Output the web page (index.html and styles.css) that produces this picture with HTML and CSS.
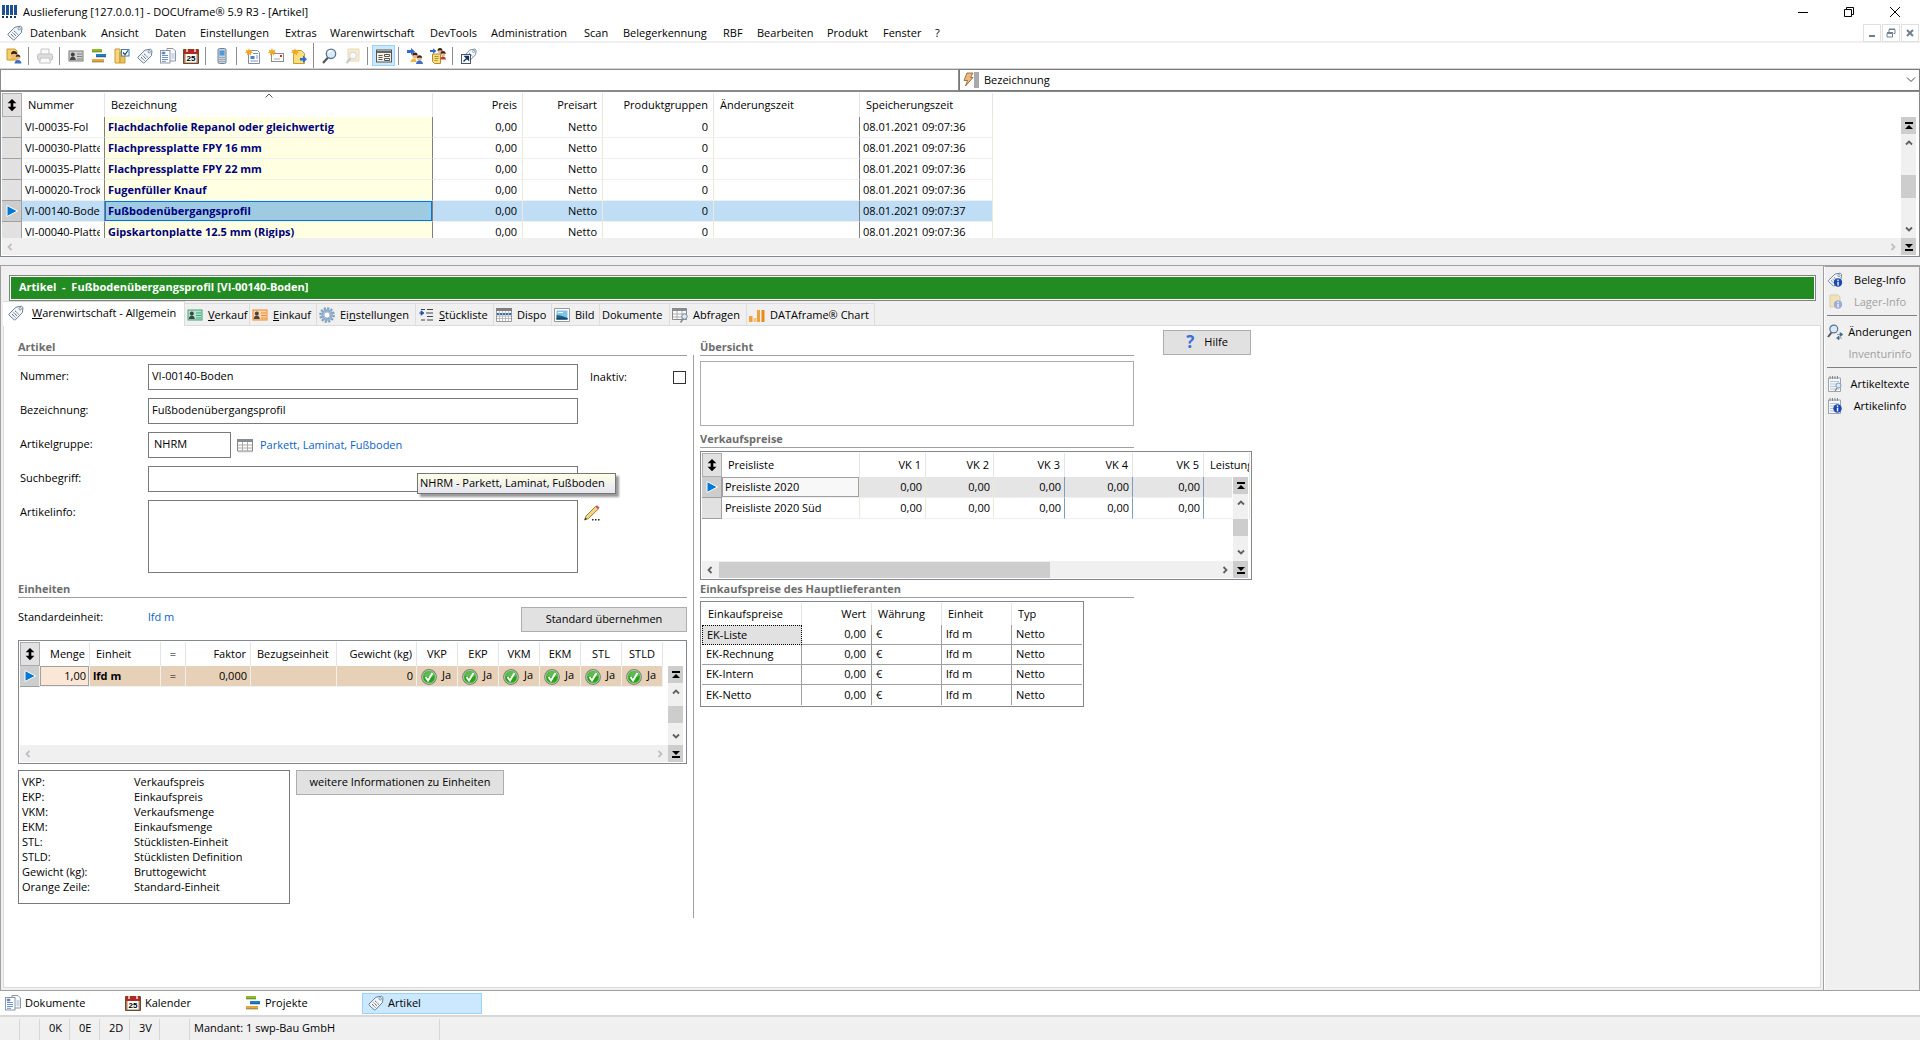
FILE: index.html
```html
<!DOCTYPE html>
<html lang="de">
<head>
    <meta charset="utf-8">
    <title>Auslieferung [127.0.0.1] - DOCUframe® 5.9 R3 - [Artikel]</title>
    <link rel="stylesheet" href="styles.css">
</head>
<body>

<!-- icon sprite -->
<svg class="sprite" aria-hidden="true">
    <symbol id="i-logo" viewBox="0 0 16 16">
        <path d="M0 1h3v10H0zM4 1h3v10H4zM8 1h3v10H8zM12 1h3v10h-3z" fill="#1d4f91"/>
        <path d="M0 12h2v2H0zM4 12h2v2H4zM8 12h2v2H8zM12 12h2v2h-2z" fill="#14315c"/>
    </symbol>
    <symbol id="i-tag" viewBox="0 0 16 16">
        <path d="M1 9 8 2.2 13.5 1.2 15 2.6 14.4 7.6 7.4 14.8Q6.6 15.2 6 14.6L1.2 10.2Q.7 9.6 1 9z" fill="#f4f7fa" stroke="#66809a"/>
        <circle cx="12.2" cy="3.8" r="1.2" fill="#fff" stroke="#66809a" stroke-width=".8"/>
        <path d="M4 9.2l3.4 3.2M5.6 7.6l3.4 3.2M7.2 6l3.4 3.2" stroke="#445" stroke-dasharray="1.2 .6"/>
    </symbol>
    <symbol id="i-user" viewBox="0 0 16 16">
        <path d="M1 1h8l2 2v9H1z" fill="#f3cf6b" stroke="#c99b35"/>
        <circle cx="8" cy="6.500" r="2.800" fill="#e9b98b"/><path d="M5 6.500q0-4 3.500-3.500Q11.500 3.500 11 6.500 8 5 5 6.500z" fill="#3b2314"/>
        <path d="M4 13q.5-4 4-3.600 2 .2 3 2z" fill="#edb93f"/>
        <circle cx="12" cy="9.500" r="2.300" fill="#e9b98b"/><path d="M9.600 9q.5-3 2.800-2.500 2 .5 2 2.800-2-1.300-4.800-.3z" fill="#3b2314"/>
        <path d="M8.500 15.500q.3-3.500 3.500-3.500t3.500 3.500z" fill="#3b6fc9"/>
    </symbol>
    <symbol id="i-print" viewBox="0 0 16 16">
        <path d="M4 6V1h8v5" fill="#fafafa" stroke="#c4c4c4"/><rect x=".5" y="6" width="15" height="6" rx="1.500" fill="#ddd" stroke="#c0c0c0"/>
        <path d="M3.500 10h9l1 5h-11z" fill="#fafafa" stroke="#c4c4c4"/>
    </symbol>
    <symbol id="i-card" viewBox="0 0 16 16">
        <rect x=".5" y="2.500" width="15" height="11" fill="currentColor"/>
        <rect x="1.500" y="3.500" width="13" height="9" fill="#fff" fill-opacity=".65"/>
        <circle cx="4.800" cy="6.500" r="2" fill="#444"/><path d="M1.800 12q.4-3.600 3-3.600t3 3.600z" fill="#444"/>
        <path d="M9 6h5M9 8.500h5M9 11h5" stroke="currentColor"/>
    </symbol>
    <symbol id="i-bars" viewBox="0 0 16 16">
        <path d="M1 1h10v3H1z" fill="#8fb925"/><path d="M5 6h10v3H5z" fill="#1b7fc4"/><path d="M1 11h12v3H1z" fill="#eaa63a"/>
        <path d="M1 4h10M5 9h10M1 14h12" stroke="#000" stroke-opacity=".35"/>
    </symbol>
    <symbol id="i-plan" viewBox="0 0 16 16">
        <path d="M1 1h5v14H1z" fill="#f6d67b" stroke="#c99b35"/><path d="M6 4h5v11H6z" fill="#edc055" stroke="#c99b35"/>
        <rect x="7.500" y="1.500" width="7.500" height="6.500" fill="#fff" stroke="#3c7dc0"/><path d="M9 4.500l2 2 3-4" fill="none" stroke="#246" stroke-width="1.200"/>
    </symbol>
    <symbol id="i-docs" viewBox="0 0 16 16">
        <path d="M7 .5h6l2.500 2.500v10H7z" fill="#f7f9fb" stroke="#8a97a6"/>
        <rect x=".5" y="2.500" width="9.500" height="12.500" fill="#fff" stroke="#8a97a6"/>
        <path d="M2 7.500h6M2 9.500h6M2 11.500h6M2 13.300h4" stroke="#5c86c4" stroke-width=".9"/><path d="M2 4h3v2H2zM11.500 6h3M11.500 8h3M11.500 10h3" stroke="#8aa4cc" fill="#3a67b0" stroke-width=".8"/>
    </symbol>
    <symbol id="i-cal" viewBox="0 0 16 16">
        <path d="M.5 1.500h15v14H.5z" fill="#a67c58" stroke="#6b4a33"/><path d="M1 1.500h14V6H1z" fill="#b5281e"/>
        <path d="M4 0v4M12 0v4" stroke="#fff" stroke-width="1.300"/><path d="M2.500 6h11v8.500h-11z" fill="#fff"/>
        <text x="8" y="13" class="cal-day">25</text>
    </symbol>
    <symbol id="i-phone" viewBox="0 0 16 16">
        <rect x="4" y=".5" width="8" height="15" rx="1.500" fill="#c8d2dc" stroke="#75828f"/><path d="M5.500 2.500h5v5h-5z" fill="#4b9be0"/>
        <path d="M5.500 9.500h5M5.500 11.500h5M5.500 13.500h5" stroke="#75828f" stroke-dasharray="1 1"/>
    </symbol>
    <symbol id="i-star" viewBox="0 0 8 8"><path d="M4 0l.9 2.600L7.500 1.500 6.400 3.500 8 4.500 6 5.200 6 7.500 4 6 2 7.500 2.200 5.200 0 4.500 1.600 3.500.5 1.500 3.100 2.600z" fill="#f3a623"/></symbol>
    <symbol id="i-newdoc" viewBox="0 0 16 16">
        <path d="M3.500 2.500h9l2 2v11h-11z" fill="#fff" stroke="#7f8fa3"/><path d="M5.500 8h4v3h-4z" fill="#4a7fcf"/><path d="M11 8h2M11 10h2M5.500 13h7.500M8 5.500h5" stroke="#7d93b5"/>
        <use href="#i-star" width="8" height="8"/>
    </symbol>
    <symbol id="i-newmail" viewBox="0 0 16 16">
        <rect x="3.500" y="5.500" width="12" height="8" fill="#fafafa" stroke="#8d8d8d"/><path d="M12 7h2v2h-2z" fill="#c33"/><path d="M6 11h6" stroke="#aaa"/>
        <use href="#i-star" width="8" height="8"/>
    </symbol>
    <symbol id="i-newnote" viewBox="0 0 16 16">
        <path d="M2.500 2.500h8l3 3v10h-11z" fill="#f7de7e" stroke="#c99b35"/><path d="M9 10h3V7.500l4 3.700-4 3.800v-2.500H9z" fill="#2f6bd0"/>
        <use href="#i-star" width="8" height="8"/>
    </symbol>
    <symbol id="i-find" viewBox="0 0 16 16">
        <path d="M6 9.500 1 15" stroke="#555" stroke-width="2.200"/><circle cx="9" cy="5.800" r="4.700" fill="#d7ebfa" stroke="#5d7489" stroke-width="1.300"/>
        <path d="M6.500 5q.8-2.300 3-2.300" fill="none" stroke="#fff" stroke-width="1.400"/>
    </symbol>
    <symbol id="i-findoff" viewBox="0 0 16 16">
        <g opacity=".4"><path d="M3 1h11v12H3z" fill="#f3d37a" stroke="#c9a14a"/><path d="M5.500 10.500l-4 4.500" stroke="#777" stroke-width="2"/><circle cx="8" cy="7.500" r="3.500" fill="#e6f1fa" stroke="#8796a5"/></g>
    </symbol>
    <symbol id="i-form" viewBox="0 0 16 16">
        <rect x=".5" y="2" width="15" height="12" fill="#f4f2e4" stroke="#555"/><path d="M1 4h14" stroke="#666" stroke-width="2"/>
        <path d="M2.500 7.500h4M2.500 9.500h4M2.500 11.500h4M8.500 6.500h5v2h-5zM8.500 10.500h5v2h-5z" fill="none" stroke="#555"/>
    </symbol>
    <symbol id="i-share" viewBox="0 0 16 16">
        <path d="M0 2h4V0l4 3.500L4 7V5H0z" fill="#2f6bd0"/>
        <circle cx="8" cy="8" r="2.600" fill="#e9b98b"/><path d="M5.300 7.500q0-3 2.700-3t2.700 3Q8 6.500 5.300 7.500z" fill="#3b2314"/><path d="M3.500 14q.5-3.800 4.500-3.500l2 3.500z" fill="#edb93f"/>
        <circle cx="12.500" cy="10.500" r="2.400" fill="#e9b98b"/><path d="M10 10q0-2.800 2.500-2.800T15 10q-2.500-1-5 0z" fill="#3b2314"/><path d="M9 16q.5-3.500 3.500-3.500T16 16z" fill="#3b6fc9"/>
    </symbol>
    <symbol id="i-share2" viewBox="0 0 16 16">
        <path d="M2.500 6h8v9.500h-6l-2-2z" fill="#f7de7e" stroke="#b98a2c"/><path d="M4.500 8.500h4M4.500 10.500h4M4.500 12.500h3" stroke="#a07a30" stroke-width=".8"/>
        <circle cx="10" cy="3" r="2.300" fill="#e9b98b"/><path d="M7.500 3q0-3 2.500-3t2.500 3Q10 1.500 7.500 3z" fill="#3b2314"/>
        <circle cx="13" cy="6" r="2.400" fill="#e9b98b"/><path d="M10.500 6q0-3 2.500-3t2.800 3Q13 4.500 10.500 6z" fill="#3b2314"/><path d="M10.500 11.500q0-3 2.500-3t3 3z" fill="#c23b3b"/>
        <path d="M0 2h3V.2L6.500 3 3 5.800V4H0z" fill="#2f6bd0"/>
    </symbol>
    <symbol id="i-link" viewBox="0 0 16 16">
        <use href="#i-tag" x="2" width="14" height="14"/><rect x=".5" y="6.500" width="9" height="9" fill="#fff" stroke="#456"/><path d="M2.500 13.500 6 10M4 8.500h3.500V12z" fill="#14315c" stroke="#14315c" stroke-width="1.300"/>
    </symbol>
    <symbol id="i-gear" viewBox="0 0 16 16">
        <circle cx="8" cy="8" r="6.600" fill="none" stroke="#7f9db9" stroke-width="2.400" stroke-dasharray="2.100 1.356"/><circle cx="8" cy="8" r="4.600" fill="#eef4fa" stroke="#8fb0cf" stroke-width="2.600"/><circle cx="8" cy="8" r="3" fill="#fff" stroke="#7f9db9" stroke-width=".7"/>
    </symbol>
    <symbol id="i-list" viewBox="0 0 16 16">
        <path d="M3 2.500h4M9 2.500h6M8 6h7M9 9.500h6M3 13h4M9 13h6" stroke="#444" stroke-width="1.200"/><path d="M1 6h3M3 3.800 6 6 3 8.200z" fill="#1c4fae" stroke="#1c4fae" stroke-width=".8"/>
    </symbol>
    <symbol id="i-dispo" viewBox="0 0 16 16">
        <path d="M.5 1.500h15v13H.5z" fill="#fff" stroke="#999"/><path d="M0 1h16v3H0z" fill="#7f7f7f"/>
        <path d="M1 9h14M1 11.500h14M3.500 4v10M6.500 4v10M9.500 4v10M12.500 4v10" stroke="#bbb"/><path d="M1 7h14" stroke="#2c6db8" stroke-width="2" stroke-dasharray="2 1"/>
    </symbol>
    <symbol id="i-pic" viewBox="0 0 16 16">
        <path d="M.5 1.500h15v13H.5z" fill="#fff" stroke="#999"/><path d="M2.500 3.500h11v9h-11z" fill="#7cc3f2"/><path d="M2.500 8q4 0 11 3v1.500h-11z" fill="#236b5c"/><path d="M2.500 11q5-1 11 0v1.500h-11z" fill="#1d3f8a"/><path d="M4 5.500h5" stroke="#fff"/>
    </symbol>
    <symbol id="i-table" viewBox="0 0 16 16">
        <path d="M.5 2.500h15v11.500H.5z" fill="#fff" stroke="#888"/><path d="M0 2h16v3H0z" fill="#868b92"/><path d="M1 8h14M1 11h14M5.500 5v9M10.500 5v9" stroke="#aaa"/><path d="M1 14.800h15.500" stroke="#bbb"/>
    </symbol>
    <symbol id="i-query" viewBox="0 0 16 16">
        <path d="M.5 1.500h14v11H.5z" fill="#fff" stroke="#888"/><path d="M0 1h15v3H0z" fill="#868b92"/><path d="M1 7h13M1 10h13M5 4v8M10 4v8" stroke="#aaa"/>
        <circle cx="12.500" cy="9.500" r="2.700" fill="#d7ebfa" stroke="#7b8c9c"/><path d="M11 12l-2.500 3.500" stroke="#888" stroke-width="1.500"/>
    </symbol>
    <symbol id="i-chart" viewBox="0 0 16 16">
        <path d="M0 9h3.500v6H0zM8 3h3v12H8z" fill="#efa23a"/><path d="M4.500 11h3v4h-3z" fill="#f6c27c"/><path d="M12.500 3h3v12h-3z" fill="#e88a1a"/>
    </symbol>
    <symbol id="i-pencil" viewBox="0 0 16 16">
        <path d="M.5 15l1.500-4L11.500 1.500l2.800 2.500L4.500 13.500z" fill="#f5d67b" stroke="#7c6430" stroke-width=".8"/><path d="M11.500 1.500 13 .3l2.500 2.200L14.300 4z" fill="#d8505a"/><path d="M.5 15l1-2.200L3 14z" fill="#222"/>
        <path d="M8 14h1.500v1.500H8zM11 14h1.500v1.500H11zM14 14h1.500v1.500H14z" fill="#222"/>
    </symbol>
    <symbol id="i-ok" viewBox="0 0 16 16">
        <circle cx="8" cy="8" r="7.300" fill="#29a317" stroke="#808080" stroke-width="1.200"/><circle cx="8" cy="8" r="6.400" fill="none" stroke="#cfe8cb" stroke-width=".8"/>
        <path d="M2.500 7Q4 2.500 8 2.500T13.500 7Q8 9 2.500 7z" fill="#fff" fill-opacity=".25"/><path d="M4.500 8l2.500 3.500L11.500 4" fill="none" stroke="#fff" stroke-width="1.900"/>
    </symbol>
    <symbol id="i-info" viewBox="0 0 10 10"><circle cx="5" cy="5" r="4.700" fill="#1d47b5"/><path d="M4.300 1.800h1.500v1.500H4.300zM4.300 4.200h1.500v4H4.300z" fill="#fff"/></symbol>
    <symbol id="i-taginfo" viewBox="0 0 16 16"><use href="#i-tag" width="16" height="15"/><use href="#i-info" x="6.500" y="6" width="9" height="9"/></symbol>
    <symbol id="i-storeinfo" viewBox="0 0 16 16"><g opacity=".4"><path d="M3 1h8l2 2v10H3z" fill="#f3cf6b" stroke="#c99b35"/><use href="#i-info" x="6.500" y="6" width="9" height="9"/></g></symbol>
    <symbol id="i-change" viewBox="0 0 16 16">
        <path d="M4.500 8.500 1 13" stroke="#555" stroke-width="2"/><circle cx="6.800" cy="5" r="3.900" fill="#d7ebfa" stroke="#5d7489" stroke-width="1.200"/>
        <path d="M10 10.500h4M13 8.500l3 2-3 2zM15 14h-4M12 12l-2.500 2 2.500 2z" stroke="#44698f" fill="#44698f" stroke-width=".6"/>
    </symbol>
    <symbol id="i-pad" viewBox="0 0 16 16">
        <path d="M1.500 2h12v13.500h-12z" fill="#f6f7f8" stroke="#9aa4ae"/><path d="M3 0v3M5.500 0v3M8 0v3M10.500 0v3" stroke="#888"/><path d="M3 5.500h9M3 8h9M3 10.500h9M3 13h9" stroke="#b4c4d4"/>
    </symbol>
    <symbol id="i-padfind" viewBox="0 0 16 16"><use href="#i-pad" width="16" height="16"/><circle cx="11.500" cy="9.500" r="2.500" fill="#d7ebfa" stroke="#8096ac"/><path d="M10 12l-2 3" stroke="#888" stroke-width="1.300"/></symbol>
    <symbol id="i-padinfo" viewBox="0 0 16 16"><use href="#i-pad" width="16" height="16"/><use href="#i-info" x="6" y="6" width="9" height="9"/></symbol>
    <symbol id="i-flash" viewBox="0 0 16 16">
        <path d="M4 1h6L7.500 5.500H10L2.500 14 4.500 8.500H1z" fill="#f0b878" stroke="#8a5a30" stroke-width=".8"/><path d="M11 1h5M11 3h5M11 5h5M11 7h5M11 9h5M11 11h5M11 13h5M11 15h5" stroke="#555"/>
    </symbol>
    <symbol id="i-sort" viewBox="0 0 10 16"><path d="M5 1l5 5H6.500v4H10l-5 5-5-5h3.500V6H0z"/></symbol>
    <symbol id="i-play" viewBox="0 0 12 12"><path d="M1 .5 11.500 6 1 11.500z" fill="#0078d7" stroke="#fff"/></symbol>
    <symbol id="i-up" viewBox="0 0 8 8"><path d="M1 5.500l3-3 3 3" fill="none" stroke="currentColor" stroke-width="1.800"/></symbol>
    <symbol id="i-down" viewBox="0 0 8 8"><path d="M1 2.500l3 3 3-3" fill="none" stroke="currentColor" stroke-width="1.800"/></symbol>
    <symbol id="i-left" viewBox="0 0 8 8"><path d="M5.500 1l-3 3 3 3" fill="none" stroke="currentColor" stroke-width="1.800"/></symbol>
    <symbol id="i-right" viewBox="0 0 8 8"><path d="M2.500 1l3 3-3 3" fill="none" stroke="currentColor" stroke-width="1.800"/></symbol>
    <symbol id="i-first" viewBox="0 0 8 8"><path d="M0 0h8v2H0zM4 3l4 4H0z"/></symbol>
    <symbol id="i-last" viewBox="0 0 8 8"><path d="M0 6h8v2H0zM4 5 0 1h8z"/></symbol>
</svg>

<header class="titlebar">
    <svg class="icon"><use href="#i-logo"/></svg>
    <span class="title">Auslieferung [127.0.0.1] - DOCUframe® 5.9 R3 - [Artikel]</span>
    <div class="window-buttons">
        <button aria-label="Minimieren"><svg viewBox="0 0 10 10"><path d="M0 5.500h10"/></svg></button>
        <button aria-label="Wiederherstellen"><svg viewBox="0 0 10 10"><path d="M.5 2.500h7v7h-7zM2.500 2.500v-2h7v7h-2"/></svg></button>
        <button aria-label="Schließen"><svg viewBox="0 0 10 10"><path d="M0 0l10 10M10 0 0 10"/></svg></button>
    </div>
</header>

<nav class="menubar">
    <svg class="icon"><use href="#i-tag"/></svg>
    <button>Datenbank</button>
    <button>Ansicht</button>
    <button>Daten</button>
    <button>Einstellungen</button>
    <button>Extras</button>
    <button>Warenwirtschaft</button>
    <button>DevTools</button>
    <button>Administration</button>
    <button>Scan</button>
    <button>Belegerkennung</button>
    <button>RBF</button>
    <button>Bearbeiten</button>
    <button>Produkt</button>
    <button>Fenster</button>
    <button>?</button>
    <div class="mdi-buttons">
        <button aria-label="Fenster minimieren"><svg viewBox="0 0 10 10"><path d="M2 8h6" stroke-width="2"/></svg></button>
        <button aria-label="Fenster wiederherstellen"><svg viewBox="0 0 10 10"><path d="M1 5.500h5.500v3.500H1zM3 4V1.500h6v4H7.500M1 4.500h6M3 1h6"/></svg></button>
        <button aria-label="Fenster schließen"><svg viewBox="0 0 10 10"><path d="M2 2l6 6M8 2 2 8" stroke-width="2"/></svg></button>
    </div>
</nav>

<div class="toolbar">
    <button aria-label="Benutzer"><svg class="icon"><use href="#i-user"/></svg></button>
    <i class="sep"></i>
    <button aria-label="Drucken" disabled><svg class="icon"><use href="#i-print"/></svg></button>
    <i class="sep"></i>
    <button aria-label="Adressen"><svg class="icon card-grey"><use href="#i-card"/></svg></button>
    <button aria-label="Projekte"><svg class="icon"><use href="#i-bars"/></svg></button>
    <button aria-label="Vorgänge"><svg class="icon"><use href="#i-plan"/></svg></button>
    <button aria-label="Artikel"><svg class="icon"><use href="#i-tag"/></svg></button>
    <button aria-label="Dokumente"><svg class="icon"><use href="#i-docs"/></svg></button>
    <button aria-label="Kalender"><svg class="icon"><use href="#i-cal"/></svg></button>
    <i class="sep"></i>
    <button aria-label="Telefon"><svg class="icon"><use href="#i-phone"/></svg></button>
    <i class="sep"></i>
    <button aria-label="Neues Dokument"><svg class="icon"><use href="#i-newdoc"/></svg></button>
    <button aria-label="Neue E-Mail"><svg class="icon"><use href="#i-newmail"/></svg></button>
    <button aria-label="Neue Notiz"><svg class="icon"><use href="#i-newnote"/></svg></button>
    <i class="sep tall"></i>
    <button aria-label="Suchen"><svg class="icon"><use href="#i-find"/></svg></button>
    <button aria-label="Ordnersuche" disabled><svg class="icon"><use href="#i-findoff"/></svg></button>
    <i class="sep"></i>
    <button aria-label="Detailansicht" class="active"><svg class="icon"><use href="#i-form"/></svg></button>
    <i class="sep"></i>
    <button aria-label="Weiterleiten"><svg class="icon"><use href="#i-share"/></svg></button>
    <button aria-label="Zuweisen"><svg class="icon"><use href="#i-share2"/></svg></button>
    <i class="sep"></i>
    <button aria-label="Verknüpfung"><svg class="icon"><use href="#i-link"/></svg></button>
</div>

<div class="searchbar">
    <input type="text" aria-label="Suche">
    <div class="search-field">
        <svg class="icon"><use href="#i-flash"/></svg>
        <select aria-label="Suchfeld"><option>Bezeichnung</option></select>
        <svg class="chevron" viewBox="0 0 10 6"><path d="M1 .5l4 4 4-4"/></svg>
    </div>
</div>

<section class="grid list-grid">
    <div class="grid-view">
        <table>
            <colgroup><col class="w20"><col class="w83"><col class="w328"><col class="w90"><col class="w80"><col class="w111"><col class="w146"><col class="w133"></colgroup>
            <thead>
                <tr><th class="gutter"><svg><use href="#i-sort"/></svg></th><th>Nummer</th><th class="sorted"><svg viewBox="0 0 8 5"><path d="M.5 4.500 4 1l3.500 3.500"/></svg>Bezeichnung</th><th class="num">Preis</th><th class="num">Preisart</th><th class="num">Produktgruppen</th><th>Änderungszeit</th><th>Speicherungszeit</th></tr>
            </thead>
            <tbody>
                <tr><td class="gutter"></td><td class="edge"><span class="clip">VI-00035-Fol</span></td><td class="name edge">Flachdachfolie Repanol oder gleichwertig</td><td class="num">0,00</td><td class="num">Netto</td><td class="num">0</td><td class="edge"></td><td>08.01.2021 09:07:36</td></tr>
                <tr><td class="gutter"></td><td class="edge"><span class="clip">VI-00030-Platten</span></td><td class="name edge">Flachpressplatte FPY 16 mm</td><td class="num">0,00</td><td class="num">Netto</td><td class="num">0</td><td class="edge"></td><td>08.01.2021 09:07:36</td></tr>
                <tr><td class="gutter"></td><td class="edge"><span class="clip">VI-00035-Platten</span></td><td class="name edge">Flachpressplatte FPY 22 mm</td><td class="num">0,00</td><td class="num">Netto</td><td class="num">0</td><td class="edge"></td><td>08.01.2021 09:07:36</td></tr>
                <tr><td class="gutter"></td><td class="edge"><span class="clip">VI-00020-Trocken</span></td><td class="name edge">Fugenfüller Knauf</td><td class="num">0,00</td><td class="num">Netto</td><td class="num">0</td><td class="edge"></td><td>08.01.2021 09:07:36</td></tr>
                <tr class="selected"><td class="gutter"><svg><use href="#i-play"/></svg></td><td class="edge"><span class="clip">VI-00140-Boden</span></td><td class="name edge">Fußbodenübergangsprofil</td><td class="num">0,00</td><td class="num">Netto</td><td class="num">0</td><td class="edge"></td><td>08.01.2021 09:07:37</td></tr>
                <tr><td class="gutter"></td><td class="edge"><span class="clip">VI-00040-Platten</span></td><td class="name edge">Gipskartonplatte 12.5 mm (Rigips)</td><td class="num">0,00</td><td class="num">Netto</td><td class="num">0</td><td class="edge"></td><td>08.01.2021 09:07:36</td></tr>
            </tbody>
        </table>
    </div>
    <div class="vscroll"><button aria-label="Anfang"><svg><use href="#i-first"/></svg></button><svg><use href="#i-up"/></svg><i class="thumb"></i><svg><use href="#i-down"/></svg><button aria-label="Ende"><svg><use href="#i-last"/></svg></button></div>
    <div class="hscroll off"><svg><use href="#i-left"/></svg><svg><use href="#i-right"/></svg></div>
</section>

<main class="workspace">
    <div class="detail">
        <h1 class="record-title">Artikel&nbsp; -&nbsp; Fußbodenübergangsprofil [VI-00140-Boden]</h1>
        <div class="tabs">
            <button class="current"><svg class="icon"><use href="#i-tag"/></svg><span><u>W</u>arenwirtschaft - Allgemein</span></button>
            <button class="t65"><svg class="icon card-green"><use href="#i-card"/></svg><span><u>V</u>erkauf</span></button>
            <button class="t67"><svg class="icon card-orange"><use href="#i-card"/></svg><span><u>E</u>inkauf</span></button>
            <button class="t99"><svg class="icon"><use href="#i-gear"/></svg><span>Ei<u>n</u>stellungen</span></button>
            <button class="t78"><svg class="icon"><use href="#i-list"/></svg><span><u>S</u>tückliste</span></button>
            <button class="t58"><svg class="icon"><use href="#i-dispo"/></svg><span>Dispo</span></button>
            <button class="t48"><svg class="icon"><use href="#i-pic"/></svg><span>Bild</span></button>
            <button class="t70"><span>Dokumente</span></button>
            <button class="t77"><svg class="icon"><use href="#i-query"/></svg><span>Abfragen</span></button>
            <button class="t128"><svg class="icon"><use href="#i-chart"/></svg><span>DATAframe® Chart</span></button>
        </div>

        <div class="page">
            <div class="columns">
                <div class="article">
                    <h2>Artikel</h2>
                    <div class="form">
                        <label for="nummer">Nummer:</label>
                        <input type="text" id="nummer" value="VI-00140-Boden">
                        <div class="inactive"><label for="inaktiv">Inaktiv:</label><input type="checkbox" id="inaktiv"></div>

                        <label for="bezeichnung">Bezeichnung:</label>
                        <input type="text" id="bezeichnung" value="Fußbodenübergangsprofil">

                        <label for="gruppe">Artikelgruppe:</label>
                        <div class="group-field">
                            <input type="text" id="gruppe" value="NHRM">
                            <svg class="icon"><use href="#i-table"/></svg>
                            <a href="#gruppe">Parkett, Laminat, Fußboden</a>
                            <div class="tooltip" role="tooltip">NHRM - Parkett, Laminat, Fußboden</div>
                        </div>

                        <label for="suchbegriff">Suchbegriff:</label>
                        <input type="text" id="suchbegriff">

                        <label for="info">Artikelinfo:</label>
                        <textarea id="info"></textarea>
                        <button class="edit" aria-label="Artikelinfo bearbeiten"><svg class="icon"><use href="#i-pencil"/></svg></button>
                    </div>

                    <h2>Einheiten</h2>
                    <div class="unit-row">
                        <span>Standardeinheit:</span>
                        <a href="#einheit">lfd m</a>
                        <button class="btn">Standard übernehmen</button>
                    </div>
                    <div class="grid unit-grid" id="einheit">
                        <div class="grid-view">
                            <table>
                                <colgroup><col class="w20"><col class="w50"><col class="w71"><col class="w25"><col class="w65"><col class="w86"><col class="w80"><col class="w41"><col class="w41"><col class="w41"><col class="w41"><col class="w41"><col class="w41"></colgroup>
                                <thead>
                                    <tr><th class="gutter"><svg><use href="#i-sort"/></svg></th><th class="num">Menge</th><th>Einheit</th><th class="mid">=</th><th class="num">Faktor</th><th>Bezugseinheit</th><th class="num">Gewicht (kg)</th><th class="mid">VKP</th><th class="mid">EKP</th><th class="mid">VKM</th><th class="mid">EKM</th><th class="mid">STL</th><th class="mid">STLD</th></tr>
                                </thead>
                                <tbody>
                                    <tr class="standard"><td class="gutter"><svg><use href="#i-play"/></svg></td><td class="num focus">1,00</td><td><b>lfd m</b></td><td class="mid">=</td><td class="num">0,000</td><td></td><td class="num">0</td><td class="yes"><svg class="icon"><use href="#i-ok"/></svg>Ja</td><td class="yes"><svg class="icon"><use href="#i-ok"/></svg>Ja</td><td class="yes"><svg class="icon"><use href="#i-ok"/></svg>Ja</td><td class="yes"><svg class="icon"><use href="#i-ok"/></svg>Ja</td><td class="yes"><svg class="icon"><use href="#i-ok"/></svg>Ja</td><td class="yes"><svg class="icon"><use href="#i-ok"/></svg>Ja</td></tr>
                                </tbody>
                            </table>
                        </div>
                        <div class="vscroll"><button aria-label="Anfang"><svg><use href="#i-first"/></svg></button><svg><use href="#i-up"/></svg><i class="thumb"></i><svg><use href="#i-down"/></svg><button aria-label="Ende"><svg><use href="#i-last"/></svg></button></div>
                        <div class="hscroll off"><svg><use href="#i-left"/></svg><svg><use href="#i-right"/></svg></div>
                    </div>
                    <div class="legend-row">
                        <dl class="legend">
                            <dt>VKP:</dt><dd>Verkaufspreis</dd>
                            <dt>EKP:</dt><dd>Einkaufspreis</dd>
                            <dt>VKM:</dt><dd>Verkaufsmenge</dd>
                            <dt>EKM:</dt><dd>Einkaufsmenge</dd>
                            <dt>STL:</dt><dd>Stücklisten-Einheit</dd>
                            <dt>STLD:</dt><dd>Stücklisten Definition</dd>
                            <dt>Gewicht (kg):</dt><dd>Bruttogewicht</dd>
                            <dt>Orange Zeile:</dt><dd>Standard-Einheit</dd>
                        </dl>
                        <button class="btn more">weitere Informationen zu Einheiten</button>
                    </div>
                </div>

                <i class="divider"></i>

                <div class="prices">
                    <h2>Übersicht</h2>
                    <button class="btn help"><b class="question">?</b>Hilfe</button>
                    <textarea class="overview" aria-label="Übersicht" readonly></textarea>
                    <h2 class="wide">Verkaufspreise</h2>
                    <div class="grid sales-grid">
                        <div class="grid-view">
                            <table>
                                <colgroup><col class="w20"><col class="w138"><col class="w66"><col class="w68"><col class="w71"><col class="w68"><col class="w71"><col class="w46"></colgroup>
                                <thead>
                                    <tr><th class="gutter"><svg><use href="#i-sort"/></svg></th><th>Preisliste</th><th class="num">VK 1</th><th class="num">VK 2</th><th class="num">VK 3</th><th class="num">VK 4</th><th class="num">VK 5</th><th>Leistung</th></tr>
                                </thead>
                                <tbody>
                                    <tr class="current-row"><td class="gutter"><svg><use href="#i-play"/></svg></td><td class="focus">Preisliste 2020</td><td class="num">0,00</td><td class="num">0,00</td><td class="num blue">0,00</td><td class="num blue">0,00</td><td class="num blue">0,00</td><td></td></tr>
                                    <tr><td class="gutter"></td><td>Preisliste 2020 Süd</td><td class="num">0,00</td><td class="num">0,00</td><td class="num blue">0,00</td><td class="num blue">0,00</td><td class="num blue">0,00</td><td></td></tr>
                                </tbody>
                            </table>
                        </div>
                        <div class="vscroll"><button aria-label="Anfang"><svg><use href="#i-first"/></svg></button><svg><use href="#i-up"/></svg><i class="thumb"></i><svg><use href="#i-down"/></svg><button aria-label="Ende"><svg><use href="#i-last"/></svg></button></div>
                        <div class="hscroll"><svg><use href="#i-left"/></svg><i class="thumb"></i><svg><use href="#i-right"/></svg></div>
                    </div>
                    <h2 class="wide">Einkaufspreise des Hauptlieferanten</h2>
                    <table class="purchase">
                        <colgroup><col class="w100"><col class="w70"><col class="w70"><col class="w70"><col class="w70"></colgroup>
                        <thead>
                            <tr><th>Einkaufspreise</th><th class="num">Wert</th><th>Währung</th><th>Einheit</th><th>Typ</th></tr>
                        </thead>
                        <tbody>
                            <tr><td class="dotted">EK-Liste</td><td class="num">0,00</td><td>€</td><td>lfd m</td><td>Netto</td></tr>
                            <tr><td>EK-Rechnung</td><td class="num">0,00</td><td>€</td><td>lfd m</td><td>Netto</td></tr>
                            <tr><td>EK-Intern</td><td class="num">0,00</td><td>€</td><td>lfd m</td><td>Netto</td></tr>
                            <tr><td>EK-Netto</td><td class="num">0,00</td><td>€</td><td>lfd m</td><td>Netto</td></tr>
                        </tbody>
                    </table>
                </div>
            </div>
        </div>
    </div>

    <aside class="sidebar">
        <button><svg class="icon"><use href="#i-taginfo"/></svg><span>Beleg-Info</span></button>
        <button disabled><svg class="icon"><use href="#i-storeinfo"/></svg><span>Lager-Info</span></button>
        <hr>
        <button><svg class="icon"><use href="#i-change"/></svg><span>Änderungen</span></button>
        <button disabled><svg class="icon"></svg><span>Inventurinfo</span></button>
        <hr>
        <button><svg class="icon"><use href="#i-padfind"/></svg><span>Artikeltexte</span></button>
        <button><svg class="icon"><use href="#i-padinfo"/></svg><span>Artikelinfo</span></button>
    </aside>
</main>

<nav class="windows">
    <button><svg class="icon"><use href="#i-docs"/></svg>Dokumente</button>
    <button><svg class="icon"><use href="#i-cal"/></svg>Kalender</button>
    <button><svg class="icon"><use href="#i-bars"/></svg>Projekte</button>
    <button class="active"><svg class="icon"><use href="#i-tag"/></svg>Artikel</button>
</nav>

<footer class="statusbar">
    <span class="s20"></span><span class="s20"></span><span class="s30">0K</span><span class="s30">0E</span><span class="s30">2D</span><span class="s30">3V</span><span class="s30"></span><span class="s250">Mandant: 1 swp-Bau GmbH</span>
</footer>

</body>
</html>
```
FILE: styles.css
```css
* {
    box-sizing: border-box;
}
body {
    margin: 0;
    height: 100vh;
    display: flex;
    flex-direction: column;
    overflow: hidden;
    background-color: #f0f0f0;
    color: #000000;
    font: 11px/15px "Open Sans", "Noto Sans", sans-serif;
}
button, input, select, textarea {
    font: inherit;
    color: inherit;
    margin: 0;
    border-radius: 0;
}
button {
    padding: 0;
    border: none;
    background: none;
    white-space: nowrap;
}
a {
    color: #0a64c8;
    text-decoration: none;
}
.sprite {
    position: absolute;
    width: 0;
    height: 0;
}
.icon {
    width: 16px;
    height: 16px;
    flex: none;
}
.cal-day {
    font: bold 8px "Liberation Sans", sans-serif;
    text-anchor: middle;
}
.card-grey { color: #7c7c7c; }
.card-green { color: #37a877; }
.card-orange { color: #ee8a22; }

/* title and menu */
.titlebar {
    display: flex;
    align-items: center;
    height: 24px;
    padding: 0 2px;
    background-color: #ffffff;
}
.title {
    padding: 0 5px 1px;
}
.window-buttons {
    display: flex;
    margin-left: auto;
}
.window-buttons button {
    width: 46px;
    height: 22px;
}
.window-buttons svg {
    width: 10px;
    height: 10px;
    fill: none;
    stroke: #000000;
}
.menubar {
    display: grid;
    grid-template-columns: 23px 71px 54px 45px 85px 45px 100px 61px 93px 39px 100px 34px 70px 56px 52px 20px 1fr;
    align-items: center;
    height: 19px;
    padding-left: 7px;
    background-color: #ffffff;
    border-bottom: 2px solid #f0f0f0;
}
.menubar button {
    padding-bottom: 2px;
    text-align: left;
}
.mdi-buttons {
    display: flex;
    justify-content: flex-end;
    gap: 1px;
    padding-right: 1px;
}
.mdi-buttons button {
    width: 18px;
    height: 18px;
    padding: 0;
    border: 1px solid #e0e0e0;
}
.mdi-buttons svg {
    width: 10px;
    height: 10px;
    display: block;
    margin: auto;
    fill: none;
    stroke: #6e7f91;
}

/* toolbar */
.toolbar {
    display: flex;
    align-items: center;
    height: 26px;
    padding-left: 2px;
    background-color: #ffffff;
    border-bottom: 1px solid #d4d4d4;
}
.toolbar button {
    width: 23px;
    height: 21px;
    display: flex;
    align-items: center;
    justify-content: center;
}
.toolbar .active {
    background-color: #cce8ff;
    border: 1px solid #99d1ff;
}
.sep {
    width: 1px;
    height: 18px;
    margin: 0 4px 0 3px;
    background-color: #8c8c8c;
}
.tall {
    height: 25px;
}
.searchbar {
    display: flex;
    height: 22px;
}
.searchbar input {
    flex: 1;
    min-width: 0;
    border: 1px solid #8c8c8c;
    background-color: #ffffff;
}
.search-field {
    flex: 1;
    display: flex;
    align-items: center;
    padding: 0 3px;
    border: 1px solid #7a7a7a;
    background-color: #ffffff;
}
.search-field select {
    flex: 1;
    appearance: none;
    border: none;
    background: none;
    padding: 0 7px 2px 5px;
}
.chevron {
    width: 10px;
    height: 6px;
    fill: none;
    stroke: #444444;
}

/* data grids */
.grid {
    display: grid;
    grid-template-columns: 1fr 17px;
    grid-template-rows: 24px 1fr 17px;
    padding: 1px;
    border: 1px solid #828790;
    background-color: #ffffff;
}
.grid-view {
    grid-area: 1 / 1 / 3 / 3;
    overflow: hidden;
}
table {
    table-layout: fixed;
    width: 0;
    border-spacing: 0;
}
th, td {
    padding: 0 5px 2px 3px;
    overflow: hidden;
    white-space: nowrap;
    text-align: left;
    font-weight: normal;
    border-right: 1px solid #ece9d8;
}
th {
    height: 24px;
    padding: 0 5px 2px 6px;
    border-right-color: #e5e5e5;
}
td {
    height: 21px;
    border-bottom: 1px solid #f0f0f0;
}
.num {
    text-align: right;
}
.mid {
    text-align: center;
    padding: 0 0 2px;
}
.gutter {
    padding: 0;
    background-color: #e1e1e1;
    border-right: 1px solid #a0a0a0;
    border-bottom: 1px solid #a0a0a0;
    text-align: center;
}
th.gutter {
    background-clip: padding-box;
    border: 1px solid #adadad;
}
.gutter svg {
    display: block;
    width: 12px;
    height: 14px;
    margin: auto;
}
.edge {
    border-right-color: #808080;
}
.clip {
    display: block;
    overflow: hidden;
    width: 75px;
}
.sorted {
    position: relative;
}
.sorted svg {
    position: absolute;
    top: 0;
    left: 50%;
    width: 8px;
    height: 5px;
    margin-left: -4px;
    fill: none;
    stroke: #555555;
}
.name {
    background-color: #ffffe1;
    color: #000080;
    font-weight: bold;
}
.selected td {
    background-color: #bfddf5;
}
.selected .name {
    background-color: #9fcbe2;
    box-shadow: inset 0 0 0 1px #0078d7;
}
.selected .gutter, .standard .gutter, .current-row .gutter {
    background-color: #cdcdcd;
}
.standard td {
    background-color: #e6d1b8;
    border-right-color: #f0f0f0;
}
.standard .focus {
    background-color: #fae7d6;
    box-shadow: inset 0 0 0 1px #a0a0a0;
}
.current-row td {
    background-color: #e5e5e5;
}
.current-row .focus {
    background-color: #f8f8f8;
    box-shadow: inset 0 0 0 1px #a0a0a0;
}
td.blue {
    border-right-color: #7f9db9;
}
.yes {
    padding: 0 0 0 4px;
}
.yes svg {
    margin-right: 5px;
    vertical-align: middle;
}
.vscroll {
    grid-area: 2 / 2 / 4 / 3;
    display: flex;
    flex-direction: column;
    align-items: center;
    width: 15px;
    background-color: #f0f0f0;
    color: #606060;
    outline: 1px solid #ffffff;
}
.vscroll button {
    width: 15px;
    height: 17px;
    background-color: #cdcdcd;
    color: #000000;
}
.vscroll svg, .hscroll svg {
    display: block;
    width: 8px;
    height: 8px;
    margin: 5px auto;
    flex: none;
}
.vscroll .thumb {
    width: 15px;
    height: 17px;
    margin: auto;
    background-color: #cdcdcd;
}
.hscroll {
    grid-area: 3 / 1;
    display: flex;
    align-items: center;
    justify-content: space-between;
    padding: 0 4px;
    background-color: #f0f0f0;
    color: #606060;
}
.hscroll svg {
    margin: 0;
}
.hscroll .thumb {
    width: 331px;
    height: 16px;
    margin: 0 auto 0 5px;
    background-color: #cdcdcd;
}
.off {
    color: #bfbfbf;
}
.w20 { width: 20px; }
.w25 { width: 25px; }
.w41 { width: 41px; }
.w46 { width: 46px; }
.w50 { width: 50px; }
.w65 { width: 65px; }
.w66 { width: 66px; }
.w68 { width: 68px; }
.w70 { width: 70px; }
.w71 { width: 71px; }
.w80 { width: 80px; }
.w83 { width: 83px; }
.w86 { width: 86px; }
.w90 { width: 90px; }
.w100 { width: 100px; }
.w111 { width: 111px; }
.w133 { width: 133px; }
.w138 { width: 138px; }
.w146 { width: 146px; }
.w328 { width: 328px; }

.list-grid {
    height: 166px;
    flex: none;
}
.list-grid .thumb {
    height: 23px;
}

/* workspace */
.workspace {
    flex: 1;
    min-height: 0;
    display: flex;
    margin-top: 8px;
    border: 1px solid #a0a0a0;
}
.detail {
    flex: 1;
    min-width: 0;
    display: flex;
    flex-direction: column;
    padding: 9px 2px 2px;
    border-right: 1px solid #a0a0a0;
}
.record-title {
    margin: 0 5px 0 6px;
    padding: 2px 9px 4px;
    border: 1px solid #808080;
    outline: 1px solid #ffffff;
    outline-offset: -2px;
    background-color: #228b22;
    color: #ffffff;
    font-size: 11px;
    line-height: 18px;
    font-weight: bold;
}
.tabs {
    display: flex;
    align-items: flex-end;
    height: 24px;
}
.tabs button {
    display: flex;
    align-items: center;
    justify-content: flex-start;
    gap: 5px;
    height: 22px;
    padding: 0 2px;
    border-top: 1px solid #dcdcdc;
    border-right: 1px solid #dcdcdc;
}
.tabs span {
    padding-bottom: 1px;
}
.tabs .current {
    width: 182px;
    height: 25px;
    margin-bottom: -1px;
    padding: 0 2px 3px 5px;
    gap: 8px;
    background-color: #ffffff;
    z-index: 1;
}
.t48 { width: 48px; }
.t58 { width: 58px; }
.t65 { width: 65px; }
.t67 { width: 67px; }
.t70 { width: 70px; }
.t77 { width: 77px; }
.t78 { width: 78px; }
.t99 { width: 99px; }
.t128 { width: 128px; }
.page {
    flex: 1;
    min-height: 0;
    padding-left: 14px;
    border: 1px solid #dcdcdc;
    background-color: #ffffff;
}
.columns {
    display: flex;
    align-items: flex-start;
}
h2 {
    margin: 0;
    height: 16px;
    border-bottom: 1px solid #a0a0a0;
    color: #6d6d6d;
    font-size: 11px;
    line-height: 14px;
    font-weight: bold;
}
.article {
    width: 669px;
    padding: 14px 0;
}
.divider {
    align-self: stretch;
    width: 1px;
    margin: 29px 6px 0;
    background-color: #a0a0a0;
}
.form {
    display: grid;
    grid-template-columns: 130px 430px 1fr;
    row-gap: 8px;
    margin: 8px 0 9px;
}
.form label {
    grid-column: 1;
    padding: 4px 2px 6px;
}
.page input[type="text"], .page textarea {
    height: 26px;
    padding: 0 3px 3px;
    border: 1px solid #7a7a7a;
    background-color: #ffffff;
}
.page textarea {
    display: block;
    resize: none;
    height: 73px;
}
.inactive {
    display: flex;
    align-items: center;
    justify-content: space-between;
    padding: 0 1px 0 10px;
}
.inactive input {
    appearance: none;
    width: 13px;
    height: 13px;
    border: 1px solid #333333;
    background-color: #ffffff;
}
.group-field {
    position: relative;
    display: flex;
    align-items: center;
    gap: 6px;
}
.page .group-field input {
    width: 83px;
    padding-left: 5px;
}
.group-field a {
    padding: 0 1px 1px;
}
.tooltip {
    position: absolute;
    left: 269px;
    top: 41px;
    width: 199px;
    height: 21px;
    padding: 1px 2px;
    white-space: nowrap;
    border: 1px solid #767676;
    background-image: linear-gradient(#ffffe8, #e4e5f0);
    box-shadow: 3px 3px 2px rgba(0, 0, 0, 0.4);
}
.edit {
    width: 16px;
    height: 16px;
    margin: 5px 6px;
}
.btn {
    height: 25px;
    padding-bottom: 2px;
    border: 1px solid #adadad;
    background-color: #e1e1e1;
}
.unit-row {
    display: grid;
    grid-template-columns: 130px 1fr 166px;
    margin: 9px 0 8px;
}
.unit-row a, .unit-row span {
    padding-top: 2px;
}
.unit-grid {
    height: 124px;
}
.unit-grid .num, .sales-grid .num {
    padding-right: 4px;
}
.unit-grid td.num, .sales-grid td.num {
    padding-right: 3px;
}
.legend-row {
    display: flex;
    align-items: flex-start;
    gap: 6px;
    margin-top: 6px;
}
.legend {
    display: grid;
    grid-template-columns: 112px 1fr;
    width: 272px;
    margin: 0;
    padding: 3px 3px 9px;
    border: 1px solid #7a7a7a;
}
.legend dd {
    margin: 0;
}
.more {
    width: 208px;
}
.prices {
    display: grid;
    grid-template-columns: 434px 88px 1fr;
    column-gap: 29px;
    justify-items: start;
}
.prices h2 {
    width: 434px;
    margin: 14px 0 5px;
}
.prices .wide {
    grid-column: 1 / -1;
    margin: 6px 0 3px;
}
.prices .sales-grid + .wide {
    margin-top: 2px;
}
.help {
    display: flex;
    align-items: center;
    justify-content: center;
    gap: 10px;
    width: 88px;
    margin-top: 4px;
}
.question {
    color: #3a6fd8;
    font-size: 17px;
}
.page .overview {
    grid-column: 1;
    width: 434px;
    height: 65px;
    border-color: #adadad;
}
.sales-grid {
    grid-column: 1 / -1;
    width: 552px;
    height: 129px;
}
.purchase {
    grid-column: 1 / -1;
    width: 384px;
    padding: 1px;
    border: 1px solid #828790;
}
.purchase th {
    height: 22px;
    padding-left: 6px;
}
.purchase td {
    height: 20px;
    padding-left: 4px;
    border-color: #a0a0a0;
}
.purchase td:last-child, .purchase th:last-child {
    border-right: none;
}
.purchase tr:last-child td {
    border-bottom: none;
}
.purchase .dotted {
    background-color: #e1e1e1;
    border: 1px dotted #000000;
}

/* right sidebar */
.sidebar {
    width: 95px;
    padding: 2px 2px 0;
    border-top: 1px solid #a0a0a0;
    border-left: 1px solid #ffffff;
}
.sidebar button {
    display: flex;
    align-items: center;
    width: 100%;
    height: 22px;
}
.sidebar span {
    flex: 1;
    padding-bottom: 1px;
    text-align: center;
}
.sidebar button:disabled {
    color: #a0a0a0;
}
.sidebar hr {
    margin: 2px 0 5px;
    border: none;
    border-top: 1px solid #808080;
}

/* open windows and status */
.windows {
    display: flex;
    align-items: center;
    flex: none;
    height: 26px;
    background-color: #ffffff;
    border-bottom: 2px solid #d7d7d7;
}
.windows button {
    display: flex;
    align-items: center;
    gap: 4px;
    width: 120px;
    height: 21px;
    padding: 0 5px 1px;
}
.windows .active {
    margin-left: 2px;
    border: 1px solid #99d1ff;
    background-color: #cce8ff;
}
.statusbar {
    display: flex;
    flex: none;
    height: 23px;
    padding-top: 2px;
}
.statusbar span {
    padding: 1px 4px;
    border-right: 1px solid #d7d7d7;
}
.statusbar .s20 { width: 20px; }
.statusbar .s30 { width: 30px; padding-left: 9px; }
.statusbar .s250 { width: 250px; }
```
